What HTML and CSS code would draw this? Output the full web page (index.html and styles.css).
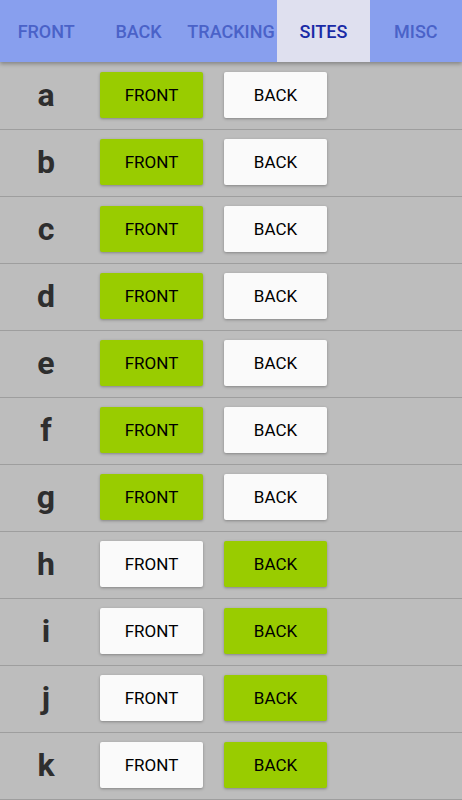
FILE: index.html
```html
<!DOCTYPE html>
<html>
<head>
    <title>Sites</title>
    <link rel="stylesheet" href="styles.css">
</head>
<body>
    <div class="tabs">
        <div class="tab">FRONT</div>
        <div class="tab">BACK</div>
        <div class="tab">TRACKING</div>
        <div class="tab selected">SITES</div>
        <div class="tab">MISC</div>
    </div>

    <div class="list">
        <div class="row"><span class="letter">a</span><button class="on">FRONT</button><button>BACK</button></div>
        <div class="row"><span class="letter">b</span><button class="on">FRONT</button><button>BACK</button></div>
        <div class="row"><span class="letter">c</span><button class="on">FRONT</button><button>BACK</button></div>
        <div class="row"><span class="letter">d</span><button class="on">FRONT</button><button>BACK</button></div>
        <div class="row"><span class="letter">e</span><button class="on">FRONT</button><button>BACK</button></div>
        <div class="row"><span class="letter">f</span><button class="on">FRONT</button><button>BACK</button></div>
        <div class="row"><span class="letter">g</span><button class="on">FRONT</button><button>BACK</button></div>
        <div class="row"><span class="letter">h</span><button>FRONT</button><button class="on">BACK</button></div>
        <div class="row"><span class="letter">i</span><button>FRONT</button><button class="on">BACK</button></div>
        <div class="row"><span class="letter">j</span><button>FRONT</button><button class="on">BACK</button></div>
        <div class="row"><span class="letter">k</span><button>FRONT</button><button class="on">BACK</button></div>
    </div>
</body>
</html>
```

FILE: styles.css
```css
body {
    margin: 0;
    font-family: Roboto, "Noto Sans", sans-serif;
    background-color: #bdbdbd;
    overflow: hidden;
}
.tabs {
    display: flex;
    height: 62px;
    background-color: #889fee;
    box-shadow: 0 2px 4px rgba(0,0,0,0.3);
    position: relative;
}
.tab {
    flex: 1;
    display: flex;
    align-items: center;
    justify-content: center;
    font-size: 18px;
    font-weight: 500;
    color: #4a62c8;
}
.tab.selected {
    background-color: #dfe0ef;
    color: #1a2aa6;
}
.list {
    padding-top: 1px;
}
.row {
    display: flex;
    align-items: flex-start;
    height: 57px;
    padding-top: 9px;
    border-bottom: 1px solid #9e9e9e;
}
.letter {
    width: 92px;
    height: 46px;
    line-height: 46px;
    text-align: center;
    font-size: 32px;
    font-weight: bold;
    color: #2e2e2e;
}
button {
    width: 103px;
    height: 46px;
    margin-left: 8px;
    margin-right: 13px;
    border: none;
    border-radius: 2px;
    background-color: #fafafa;
    color: #000;
    font-family: Roboto, sans-serif;
    font-size: 17px;
    box-shadow: 0 1px 3px rgba(0,0,0,0.3);
}
button + button {
    margin-left: 8px;
}
button.on {
    background-color: #99cc00;
}
```
